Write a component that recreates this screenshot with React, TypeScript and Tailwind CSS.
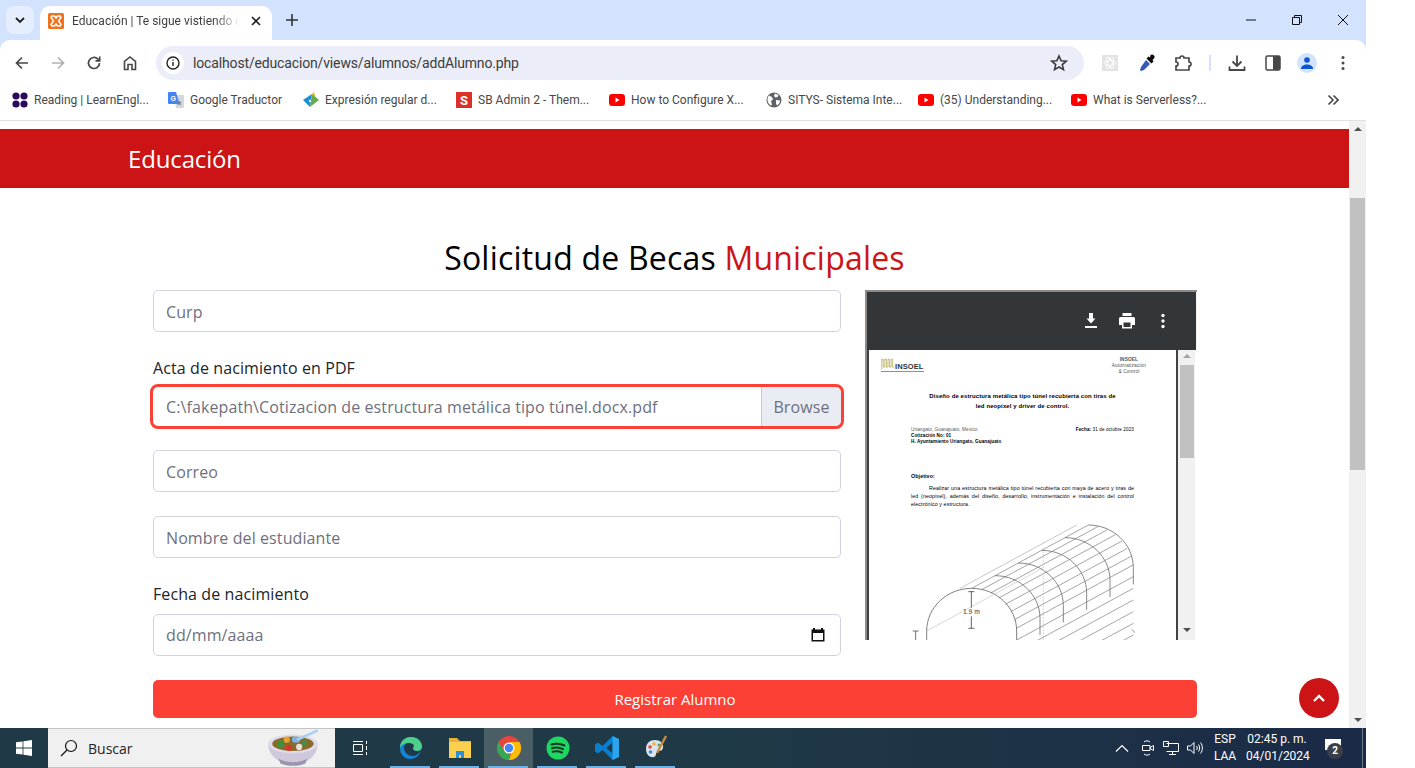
const bookmarks = [
  { label: "Reading | LearnEngl...", icon: "dots", width: "w-[156px]" },
  { label: "Google Traductor", icon: "translate", width: "w-[135px]" },
  { label: "Expresión regular d...", icon: "kite", width: "w-[153px]" },
  { label: "SB Admin 2 - Them...", icon: "s", width: "w-[153px]" },
  { label: "How to Configure X...", icon: "yt", width: "w-[157px]" },
  { label: "SITYS- Sistema Inte...", icon: "globe", width: "w-[152px]" },
  { label: "(35) Understanding...", icon: "yt", width: "w-[153px]" },
  { label: "What is Serverless?...", icon: "yt", width: "w-[150px]" },
];

function BookmarkIcon({ name }: { name: string }) {
  if (name === "dots") {
    return (
      <svg width="16" height="16" viewBox="0 0 16 16" fill="#2b0a5c">
        <circle cx="4" cy="4" r="3.6" />
        <circle cx="12" cy="4" r="3.6" />
        <circle cx="4" cy="12" r="3.6" />
        <circle cx="12" cy="12" r="3.6" />
      </svg>
    );
  }
  if (name === "translate") {
    return (
      <svg width="16" height="16" viewBox="0 0 16 16">
        <path d="M6 3h9a1 1 0 0 1 1 1v11a1 1 0 0 1-1 1H8z" fill="#d5d8dc" />
        <path d="M1 0h7l3.4 12H1a1 1 0 0 1-1-1V1a1 1 0 0 1 1-1z" fill="#4285f4" />
        <text x="2.4" y="8.6" fontSize="7" fontWeight="700" fill="#fff" fontFamily="Liberation Sans, sans-serif">G</text>
        <path d="M11 8l1 2 2-.2-1.600 1.500.6 2.200-2-1.200-1.700 1.200z" fill="#7b8087" />
      </svg>
    );
  }
  if (name === "kite") {
    return (
      <svg width="16" height="16" viewBox="0 0 16 16">
        <path d="M0 8 L9 2 L7 15 Z" fill="#1a8fd1" />
        <path d="M9 2 L16 8 L7 15 Z" fill="#6aa84f" />
        <path d="M9 2 L11 0 L12.500 5 Z" fill="#f4b400" />
        <path d="M7 7l1.500 3h-3z" fill="#fff" />
      </svg>
    );
  }
  if (name === "s") {
    return (
      <div className="flex h-4 w-4 items-center justify-center bg-[#dc3027] text-[13px] leading-none font-bold text-white">
        S
      </div>
    );
  }
  if (name === "yt") {
    return (
      <svg width="16" height="16" viewBox="0 0 16 16">
        <rect y="2" width="16" height="12" rx="3" fill="#f00" />
        <path d="M6.500 5.500 L10.500 8 L6.500 10.500 Z" fill="#fff" />
      </svg>
    );
  }
  return (
    <svg width="16" height="16" viewBox="0 0 16 16">
      <circle cx="8" cy="8" r="7.500" fill="#5f6368" />
      <path d="M3 3.500l3 1.500 1 2.500-2 1.500 1 3.500-1 1C3 12.500 1.500 10 1.500 8 1.500 6 2 4.500 3 3.500zM9 1.500l3.500 1.500-1 2-2 .5L8 4zM10 8l4 .5c0 2-1 4-3 5l-1-2z" fill="#fff" />
    </svg>
  );
}

function Tunnel() {
  const arches = [1, 2, 3, 4, 5];
  // hatch lines run along the tunnel axis, from the right half of the front arch
  const hatch = [
    [335, 382], [365, 386], [392, 396], [416, 411], [436, 430], [452, 452], [463, 476], [469, 502],
    [470, 537], [470, 572], [470, 607], [470, 642], [470, 677], [470, 712],
  ];
  return (
    <svg viewBox="27 150 921 387" className="block h-[129px] w-[307px]" fill="none">
      <path d="M200 560 V510 C200 440 260 382 335 382 C410 382 470 440 470 510 V560" stroke="#666" strokeWidth="2.500" />
      {arches.map((i) => (
        <path
          key={i}
          d="M335 382 C410 382 470 440 470 510 V560"
          transform={`translate(${i * 70} ${i * -38})`}
          stroke="#888"
          strokeWidth="3"
        />
      ))}
      {hatch.map(([x, y]) => (
        <line key={`${x}-${y}`} x1={x} y1={y} x2={x + 350} y2={y - 190} stroke="#777" strokeWidth="2" />
      ))}
      <line x1="200" y1="510" x2="550" y2="320" stroke="#c4c4c4" strokeWidth="2" />
      <line x1="300" y1="382" x2="650" y2="192" stroke="#aaa" strokeWidth="2" />
      <line x1="550" y1="262" x2="550" y2="537" stroke="#bbb" strokeWidth="2" strokeDasharray="5 4" />
      <path d="M325 392 H343 M334 392 V440 M334 466 V502 M325 502 H343" stroke="#444" strokeWidth="2.500" />
      <path d="M158 510 H176 M167 510 V537" stroke="#555" strokeWidth="2.500" />
      <path d="M815 505 L825 515" stroke="#555" strokeWidth="2" />
      <text x="334" y="460" fontSize="20" fill="#333" textAnchor="middle" fontFamily="Liberation Sans, sans-serif">1.9 m</text>
    </svg>
  );
}

function PdfPreview() {
  return (
    <div className="flex h-[350px] w-[332px] flex-col overflow-hidden border-t-2 border-l-2 border-[#8b8b8b] bg-white font-['Liberation_Sans',sans-serif]">
      <div className="flex h-[58px] w-[329px] items-center justify-end gap-[18px] bg-[#323639] pr-[24px] shadow-md">
        <svg width="18" height="18" viewBox="0 0 18 18" fill="#fff">
          <path d="M13.500 6.500H11V1H7v5.500H4.500L9 11.500zM3 14h12v2H3z" />
        </svg>
        <svg width="18" height="18" viewBox="0 0 18 18" fill="#fff">
          <path d="M4.500 1h9v3h-9zM2.500 5h13A1.500 1.500 0 0 1 17 6.500V13h-3v3.500H4V13H1V6.500A1.500 1.500 0 0 1 2.500 5zM5.500 10.500v4.500h7v-4.500z" />
        </svg>
        <svg width="18" height="18" viewBox="0 0 18 18" fill="#fff">
          <circle cx="9" cy="3.500" r="1.700" />
          <circle cx="9" cy="9" r="1.700" />
          <circle cx="9" cy="14.500" r="1.700" />
        </svg>
      </div>
      <div className="flex flex-1 overflow-hidden">
        <div className="flex w-[311px] flex-col border-x-[2px] border-[#3f4346] bg-white text-black">
          <div className="flex items-start justify-between pt-[7px] pr-[30px] pl-[12px]">
            <div className="flex items-end border-b border-[#a8962f]">
              <svg width="14" height="14" viewBox="0 0 18 14" fill="none" stroke="#a8962f" strokeWidth="0.800">
                <path d="M1 14V1h2v10h2V1h2v10h2V1h2v10h2V1h2v10h2" />
              </svg>
              <span className="text-[7.500px] leading-[9px] font-bold text-[#333]">INSOEL</span>
            </div>
            <div className="text-center text-[4.800px] leading-[6px] text-[#555]">
              <div className="font-bold">INSOEL</div>
              <div>Automatización</div>
              <div>&amp; Control</div>
            </div>
          </div>
          <div className="mt-[17px] text-center text-[6px] leading-[9.500px] font-bold">
            <div>Diseño de estructura metálica tipo túnel recubierta con tiras de</div>
            <div>led neopixel y driver de control.</div>
          </div>
          <div className="mt-[16px] px-[42px] text-[4.600px] leading-[5.800px]">
            <div className="flex justify-between">
              <span className="text-[#555]">Uriangato, Guanajuato, México.</span>
              <span><b>Fecha:</b> 31 de octubre 2023</span>
            </div>
            <div className="font-bold">Cotización No: 01</div>
            <div className="font-bold">H. Ayuntamiento Uriangato, Guanajuato</div>
          </div>
          <div className="mt-[28px] px-[42px] text-[5.300px] leading-[8px]">
            <div className="font-bold">Objetivo:</div>
            <p className="mt-[4px] text-justify indent-[18px]">
              Realizar una estructura metálica tipo túnel recubierta con maya de acero y tiras de led (neopixel), además del diseño, desarrollo, instrumentación e instalación del control electrónico y estructura.
            </p>
          </div>
          <div className="mt-auto h-[129px] overflow-hidden">
            <Tunnel />
          </div>
        </div>
        <div className="flex w-[17px] flex-col items-center bg-[#f1f1f1] pt-[4px]">
          <div className="h-0 w-0 border-x-[4px] border-b-[4px] border-x-transparent border-b-[#a3a3a3]" />
          <div className="mt-[7px] h-[93px] w-[14px] bg-[#c1c1c1]" />
          <div className="mt-auto mb-[8px] h-0 w-0 border-x-[4px] border-t-[4px] border-x-transparent border-t-[#505050]" />
        </div>
      </div>
    </div>
  );
}

function Field({ text }: { text: string }) {
  return (
    <div className="flex h-[42px] items-center rounded-[5px] border border-[#d1d3e2] px-3 pt-[2px] text-[#6e707e]">
      {text}
    </div>
  );
}

function Page() {
  return (
    <div className="relative h-[607px] flex-1 overflow-hidden pt-2">
      <header className="flex h-[59px] items-center bg-[#cc1417] pl-[128px] text-2xl tracking-[-0.15px] text-white">
        Educación
      </header>
      <h1 className="mt-[47px] text-center text-[32px] leading-[46px] tracking-[0.2px] text-black">
        Solicitud de Becas <span className="text-[#cc1417]">Municipales</span>
      </h1>
      <div className="mx-[153px] mt-[9px] w-[1044px] text-base tracking-[0.1px]">
        <div className="flex gap-6">
          <div className="flex w-[688px] flex-col">
            <Field text="Curp" />
            <label className="mt-[25px] mb-[8px] leading-[22px] text-[#212529]">Acta de nacimiento en PDF</label>
            <div className="flex h-[39px] rounded-[5px] text-[#6e707e] outline-[3px] outline-[#fd4036]">
              <div className="flex flex-1 items-center pl-[13px]">
                C:\fakepath\Cotizacion de estructura metálica tipo túnel.docx.pdf
              </div>
              <div className="flex w-[80px] items-center justify-center rounded-r-[5px] border-l border-[#f5b5b0] bg-[#eaecf4]">
                Browse
              </div>
            </div>
            <div className="mt-[24px]">
              <Field text="Correo" />
            </div>
            <div className="mt-[24px]">
              <Field text="Nombre del estudiante" />
            </div>
            <label className="mt-[25px] mb-[9px] leading-[22px] text-[#212529]">Fecha de nacimiento</label>
            <div className="flex h-[42px] items-center justify-between rounded-[5px] border border-[#d1d3e2] pr-[14px] pl-3 text-[#6e707e]">
              <span>dd/mm/aaaa</span>
              <svg width="16" height="16" viewBox="0 0 16 16" fill="#111">
                <path d="M3 1h2v1.500h6V1h2v1.500h1.500v12h-13v-12H3zM3 6v7h10V6z" />
              </svg>
            </div>
          </div>
          <PdfPreview />
        </div>
        <button className="mt-6 h-[38px] w-full rounded-[5px] bg-[#fd4036] text-[15px] tracking-normal text-white">Registrar Alumno</button>
      </div>
      <div className="absolute right-[10px] bottom-[10px] flex h-10 w-10 items-center justify-center rounded-full bg-[#cc1417]">
        <svg width="14" height="10" viewBox="0 0 14 10" fill="none" stroke="#fff" strokeWidth="2.400">
          <path d="M2 8l5-5 5 5" />
        </svg>
      </div>
    </div>
  );
}

function Scrollbar() {
  return (
    <div className="flex h-[607px] w-[17px] flex-col items-center bg-[#f1f1f1] pt-[6px]">
      <div className="h-0 w-0 border-x-[4px] border-b-[4px] border-x-transparent border-b-[#505050]" />
      <div className="mt-[67px] h-[272px] w-[15px] bg-[#c1c1c1]" />
      <div className="mt-auto mb-[6px] h-0 w-0 border-x-[4px] border-t-[4px] border-x-transparent border-t-[#505050]" />
    </div>
  );
}

function TabStrip() {
  return (
    <div className="flex h-10 items-end bg-[#d3e3fd] pl-1.5 font-['Roboto',sans-serif]">
      <div className="mb-[6px] flex h-7 w-7 items-center justify-center rounded-lg bg-[#e4eefd]">
        <svg width="10" height="6" viewBox="0 0 10 6" fill="none" stroke="#1f1f1f" strokeWidth="1.800">
          <path d="M1 1l4 4 4-4" />
        </svg>
      </div>
      <div className="ml-[6px] flex h-[34px] w-[232px] items-center rounded-t-[10px] bg-white pr-[8px] pb-[4px] pl-2">
        <svg width="16" height="16" viewBox="0 0 16 16">
          <rect width="16" height="16" rx="1.500" fill="#f2711c" />
          <path d="M4 3h2.500L8 5l1.500-2H12l1 1.500-2.500 3.500 2.500 3.500L12 13H9.500L8 11l-1.500 2H4l-1-1.500L5.500 8 3 4.500z" fill="none" stroke="#fff" strokeWidth="1.500" />
        </svg>
        <div className="ml-2 w-[168px] overflow-hidden text-xs leading-[16px] whitespace-nowrap text-[#3f3f3f] [mask-image:linear-gradient(to_right,black_85%,transparent)]">
          Educación | Te sigue vistiendo d
        </div>
        <svg width="10" height="10" viewBox="0 0 10 10" stroke="#222" strokeWidth="1.600" className="ml-auto mr-[3px]">
          <path d="M1 1l8 8M9 1l-8 8" />
        </svg>
      </div>
      <svg width="12" height="12" viewBox="0 0 12 12" stroke="#333" strokeWidth="1.600" className="mb-[14px] ml-[14px]">
        <path d="M6 0v12M0 6h12" />
      </svg>
      <div className="mb-[14px] ml-auto flex items-center">
        <svg width="12" height="12" viewBox="0 0 12 12" stroke="#111" className="mr-[34px]">
          <path d="M1 6h10" />
        </svg>
        <svg width="12" height="12" viewBox="0 0 12 12" fill="none" stroke="#111" className="mr-[34px]">
          <path d="M1.500 3.500h7v7h-7zM3.500 3.500v-2h7v7h-2" />
        </svg>
        <svg width="12" height="12" viewBox="0 0 12 12" stroke="#111" className="mr-[17px]">
          <path d="M1 1l10 10M11 1L1 11" />
        </svg>
      </div>
    </div>
  );
}

function Toolbar() {
  return (
    <div className="bg-[#d3e3fd] font-['Roboto',sans-serif]">
      <div className="flex h-[40px] items-start rounded-t-[10px] bg-white pt-[6px] text-[#474747]">
        <div className="flex h-[34px] w-[156px] items-center pl-[14px]">
          <svg width="16" height="16" viewBox="0 0 16 16" fill="none" stroke="#474747" strokeWidth="1.700">
            <path d="M14 8H2.500M8 2.500L2.500 8 8 13.500" />
          </svg>
          <svg width="16" height="16" viewBox="0 0 16 16" fill="none" stroke="#b0b0b0" strokeWidth="1.700" className="ml-5">
            <path d="M2 8h11.500M8 2.500L13.500 8 8 13.500" />
          </svg>
          <svg width="16" height="16" viewBox="0 0 16 16" fill="none" stroke="#474747" strokeWidth="1.700" className="ml-5">
            <path d="M13.500 8a5.500 5.500 0 1 1-1.600-3.900L13.500 5.500" />
            <path d="M13.700 1.500v4.300H9.500" />
          </svg>
          <svg width="16" height="16" viewBox="0 0 16 16" fill="none" stroke="#474747" strokeWidth="1.600" className="ml-5">
            <path d="M2.500 14.500V6.500L8 2l5.500 4.500v8h-3.500v-5H6v5z" />
          </svg>
        </div>
        <div className="flex h-[34px] w-[928px] items-center rounded-full bg-[#ebeef8] pr-4 pl-[6px]">
          <div className="flex h-[22px] w-[22px] items-center justify-center rounded-full bg-white">
            <svg width="14" height="14" viewBox="0 0 14 14" fill="none" stroke="#222" strokeWidth="1.400">
              <circle cx="7" cy="7" r="6" />
              <path d="M7 6v4M7 3.500v1.300" />
            </svg>
          </div>
          <span className="ml-[9px] text-[14px] tracking-[-0.15px] text-[#3c3c3c]">localhost/educacion/views/alumnos/addAlumno.php</span>
          <svg width="18" height="18" viewBox="0 0 18 18" fill="none" stroke="#3c3c3c" strokeWidth="1.600" className="ml-auto">
            <path d="M9 2l2.100 4.700 5.100.5-3.900 3.400 1.200 5L9 13l-4.500 2.600 1.200-5L1.800 7.200l5.100-.5z" />
          </svg>
        </div>
        <div className="flex h-[34px] flex-1 items-center pl-[18px]">
          <div className="flex h-4 w-4 items-center justify-center bg-[#e3e3e3]">
            <svg width="14" height="14" viewBox="0 0 14 14" fill="none" stroke="#fff" strokeWidth="0.900">
              <ellipse cx="7" cy="7" rx="6" ry="2.500" />
              <ellipse cx="7" cy="7" rx="6" ry="2.500" transform="rotate(60 7 7)" />
              <ellipse cx="7" cy="7" rx="6" ry="2.500" transform="rotate(120 7 7)" />
            </svg>
          </div>
          <svg width="18" height="18" viewBox="0 0 18 18" className="ml-[20px]">
            <path d="M12.500 1a2.500 2.500 0 0 1 3.500 3.500L14.500 6l1 1.500-2 2L8.500 4.500l2-2L12 3.500z" fill="#0d0d0d" />
            <path d="M8 6l4 4-6 6-3 1-1-1 1-3z" fill="#3358b8" />
          </svg>
          <svg width="18" height="18" viewBox="0 0 18 18" fill="none" stroke="#474747" strokeWidth="1.700" className="ml-[18px]">
            <path d="M2 4h4a2 2 0 0 1 4 0h5v4a2 2 0 0 1 0 4v4H2v-4a2 2 0 0 0 0-4z" />
          </svg>
          <div className="ml-[17px] h-4 w-0.5 bg-[#d3e3fd]" />
          <svg width="18" height="18" viewBox="0 0 18 18" fill="none" stroke="#474747" strokeWidth="1.800" className="ml-[17px]">
            <path d="M9 1.500v10M4.500 7.500L9 12l4.500-4.500M1.500 12.500V16h15v-3.500" />
          </svg>
          <svg width="16" height="16" viewBox="0 0 16 16" className="ml-[19px]">
            <rect x="1" y="1" width="14" height="14" rx="1.500" fill="none" stroke="#474747" strokeWidth="1.500" />
            <rect x="8" y="1" width="7" height="14" fill="#474747" />
          </svg>
          <div className="ml-[16px] flex h-5 w-5 items-center justify-center rounded-full bg-[#d3e3fd]">
            <svg width="12" height="12" viewBox="0 0 12 12" fill="#0b57d0">
              <circle cx="6" cy="3" r="2.800" />
              <path d="M0 12c0-3 2.500-4.500 6-4.500s6 1.500 6 4.500z" />
            </svg>
          </div>
          <svg width="4" height="16" viewBox="0 0 4 16" fill="#474747" className="ml-[24px]">
            <circle cx="2" cy="2.500" r="1.500" />
            <circle cx="2" cy="8" r="1.500" />
            <circle cx="2" cy="13.500" r="1.500" />
          </svg>
        </div>
      </div>
    </div>
  );
}

function BookmarkBar() {
  return (
    <div className="flex h-[41px] items-center border-b border-[#e0e0e0] bg-white pl-3 font-['Roboto',sans-serif] text-xs text-[#474747]">
      {bookmarks.map((b) => (
        <div key={b.label} className={`flex shrink-0 items-center gap-1.5 ${b.width}`}>
          <BookmarkIcon name={b.icon} />
          <span className="whitespace-nowrap">{b.label}</span>
        </div>
      ))}
      <svg width="12" height="12" viewBox="0 0 12 12" fill="none" stroke="#474747" strokeWidth="1.600" className="ml-auto mr-[27px]">
        <path d="M1.500 1.500L6 6l-4.500 4.500M6.500 1.500L11 6l-4.500 4.500" />
      </svg>
    </div>
  );
}

function Bowl() {
  return (
    <svg width="58" height="38" viewBox="0 0 56 36">
      <path d="M2 14c0 10 9 20 24 20s24-10 24-20z" fill="#cfc8dc" />
      <path d="M12 28c6 5 22 5 28 0l-2 5c-6 3-18 3-24 0z" fill="#9c93ad" />
      <ellipse cx="26" cy="14" rx="24" ry="9" fill="#e0dbe8" />
      <ellipse cx="26" cy="14" rx="20" ry="7" fill="#8a6a2c" />
      <circle cx="14" cy="14" r="3.500" fill="#3f9142" />
      <circle cx="22" cy="18" r="2.800" fill="#d9352b" />
      <circle cx="20" cy="10" r="3" fill="#e8a52e" />
      <circle cx="32" cy="17" r="3" fill="#e9e0d6" />
      <circle cx="37" cy="13" r="2.600" fill="#3f9142" />
      <ellipse cx="29" cy="10" rx="4" ry="3" fill="#7fb2e5" />
      <path d="M30 10L50 1" stroke="#a9cdf0" strokeWidth="2.500" />
    </svg>
  );
}

function TaskIcon({ children, active }: { children: React.ReactNode; active?: boolean }) {
  return (
    <div className={`relative flex h-10 w-[49px] items-center justify-center ${active ? "bg-[#4a5e66]" : ""}`}>
      {children}
      <div className="absolute bottom-0 left-1 h-0.5 w-10 bg-[#6db3e8]" />
    </div>
  );
}

function Taskbar() {
  return (
    <div className="flex h-10 items-stretch bg-gradient-to-r from-[#1f3a46] via-[#1f3a46] to-[#1b2a47] text-white">
      <div className="flex w-12 items-center justify-center">
        <svg width="16" height="16" viewBox="0 0 16 16" fill="#fff">
          <path d="M0 2.300l6.600-.9v6.200H0zM7.400 1.300L16 0v7.600H7.400zM0 8.400h6.600v6.200L0 13.700zM7.400 8.400H16V16l-8.600-1.200z" />
        </svg>
      </div>
      <div className="flex w-[287px] items-center border-y border-[#c4c4c4] bg-[#f0f0f0] pl-[12px] text-[14px] text-[#222]">
        <svg width="18" height="18" viewBox="0 0 18 18" fill="none" stroke="#111" strokeWidth="1.200">
          <circle cx="11" cy="7" r="5.500" />
          <path d="M7 11l-6 6" />
        </svg>
        <span className="ml-[10px]">Buscar</span>
        <div className="ml-auto mr-[11px]">
          <Bowl />
        </div>
      </div>
      <div className="flex w-[50px] items-center justify-center">
        <svg width="16" height="16" viewBox="0 0 16 16" fill="none" stroke="#fff">
          <path d="M1.500 4.500h9v7h-9zM1 1.500h10M1 14.500h10M14.500 1v3M14.500 6v4M14.500 12v3" />
        </svg>
      </div>
      <div className="flex pl-[1px]">
        <TaskIcon>
          <svg width="24" height="24" viewBox="0 0 24 24">
            <path d="M22 14c-1 5-5 9-11 9C5 23 1 18 1 12 1 5 6 1 12 1c6 0 11 4 11 10 0 2-2 4-5 4-2 0-4-1-4-3 0-1 1-1 1-2 0-2-2-3-5-3-3 0-5 2-5 5 0 4 3 7 8 8 4 0 7-2 9-6z" fill="#1283d7" />
            <path d="M1 12C1 5 6 1 12 1c6 0 11 4 11 10 0 2-2 4-5 4-2 0-4-1-4-3 0-1 1-1 1-2 0-2-2-3-5-3-4 0-8 2-9 5z" fill="#4fd08a" />
          </svg>
        </TaskIcon>
        <TaskIcon>
          <svg width="24" height="22" viewBox="0 0 24 22">
            <path d="M1 1h8l3 3h11v3H1z" fill="#e8b13a" />
            <path d="M1 5h22v16H1z" fill="#fbd04f" />
            <path d="M8 21v-7h8v7h-3v-3h-2v3z" fill="#2a8fd8" />
          </svg>
        </TaskIcon>
        <TaskIcon active>
          <svg width="24" height="24" viewBox="0 0 24 24">
            <circle cx="12" cy="12" r="12" fill="#e8453c" />
            <path d="M12 24A12 12 0 0 1 1.600 6L7 15l5 1z" fill="#34a853" />
            <path d="M12 24a12 12 0 0 0 10.400-18H12l5 3-5 15z" fill="#fbbc05" />
            <circle cx="12" cy="12" r="5.500" fill="#fff" />
            <circle cx="12" cy="12" r="4.300" fill="#4285f4" />
          </svg>
        </TaskIcon>
        <TaskIcon>
          <svg width="24" height="24" viewBox="0 0 24 24">
            <circle cx="12" cy="12" r="11.500" fill="#1ed760" />
            <path d="M5.500 8.500c4-1.200 9-1 13 1M6 12.200c3.500-1 7.500-.8 11 1M6.700 15.700c3-.8 6-.6 9.300.8" stroke="#173828" strokeWidth="2" fill="none" strokeLinecap="round" />
          </svg>
        </TaskIcon>
        <TaskIcon>
          <svg width="24" height="24" viewBox="0 0 24 24">
            <path d="M17.500 0L24 3v18l-6.500 3-10-10-4.500 3.500L0 15.500v-7L3 6.500 7.500 10z" fill="#0a7fd0" />
            <path d="M17.500 6.500L11.500 12l6 5.500z" fill="#1f3a46" />
            <path d="M17.500 0L24 3v18l-6.500 3z" fill="#2ba5ee" />
          </svg>
        </TaskIcon>
        <TaskIcon>
          <svg width="24" height="26" viewBox="0 0 24 26">
            <path d="M2 14C2 8 6 5 11 5c5 0 9 3 8 8-1 4-4 2-6 4s0 4-3 5c-5 1-8-3-8-8z" fill="#d9e3ee" />
            <circle cx="6" cy="12" r="1.800" fill="#e8453c" />
            <circle cx="10" cy="9" r="1.800" fill="#f2b233" />
            <circle cx="6.500" cy="17" r="1.800" fill="#2a8fd8" />
            <circle cx="15" cy="10" r="1.500" fill="#4aa84f" />
            <path d="M13 18L22 1" stroke="#c98a3b" strokeWidth="2.400" />
          </svg>
        </TaskIcon>
      </div>
      <div className="ml-auto flex items-center font-['Roboto',sans-serif] text-xs">
        <svg width="14" height="8" viewBox="0 0 14 8" fill="none" stroke="#fff" strokeWidth="1.200" className="mr-[12px]">
          <path d="M1 7.500l6-6 6 6" />
        </svg>
        <svg width="14" height="18" viewBox="0 0 14 18" fill="none" stroke="#fff" className="mr-[8px]">
          <path d="M1.500 6.500h7.500v5H1.500zM9 8.500l3.500-2v5l-3.500-2zM3 3c1-1.500 5-1.500 6 0M3 15c1 1.500 5 1.500 6 0" />
        </svg>
        <svg width="16" height="14" viewBox="0 0 16 14" fill="none" stroke="#fff" className="mr-[8px]">
          <path d="M3.500 2.500h12v8h-12M6 13.500h7M9.500 10.500v3M.5.500h5v5h-5z" />
        </svg>
        <svg width="16" height="14" viewBox="0 0 16 14" fill="none" stroke="#fff" className="mr-[9px]">
          <path d="M.5 5h3L7 1.500v11L3.500 9h-3zM9.500 5c1 1 1 3 0 4M11.500 3.500c1.500 2 1.500 5 0 7M13.500 1.500c2.500 3 2.500 8 0 11" />
        </svg>
        <div className="w-[26px] text-center leading-[17px]">
          <div>ESP</div>
          <div>LAA</div>
        </div>
        <div className="ml-[8px] w-[62px] text-center leading-[17px]">
          <div>02:45 p. m.</div>
          <div>04/01/2024</div>
        </div>
        <div className="relative ml-[17px] mr-[21px] h-5 w-4">
          <svg width="16" height="14" viewBox="0 0 16 14" fill="#fff" className="mt-[1px]">
            <path d="M0 0h16v11H6l-3 3v-3H0z" />
          </svg>
          <div className="absolute top-[5px] left-[2px] flex h-4 w-4 items-center justify-center rounded-full bg-[#3b4048] text-[10px] font-bold">
            2
          </div>
        </div>
        <div className="h-10 w-px bg-[#6b7a8c]" />
        <div className="w-[3px]" />
      </div>
    </div>
  );
}

export default function App() {
  return (
    <div className="flex h-[768px] w-[1415px] overflow-hidden bg-white font-['Open_Sans',sans-serif]">
      <div className="flex h-full w-[1366px] flex-col">
        <TabStrip />
        <Toolbar />
        <BookmarkBar />
        <div className="flex">
          <Page />
          <Scrollbar />
        </div>
        <Taskbar />
      </div>
    </div>
  );
}
